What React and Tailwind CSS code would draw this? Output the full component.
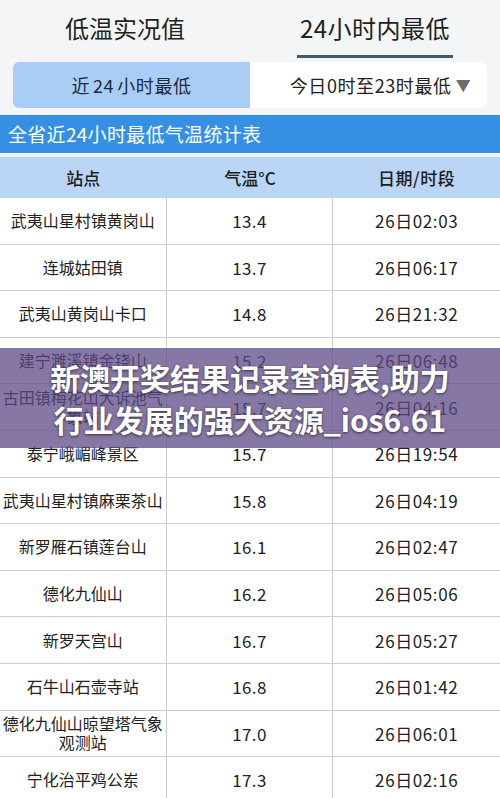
const rows = [
  ['武夷山星村镇黄岗山', '13.4', '26日02:03'],
  ['连城姑田镇', '13.7', '26日06:17'],
  ['武夷山黄岗山卡口', '14.8', '26日21:32'],
  ['建宁濉溪镇金铙山', '15.2', '26日06:48'],
  ['古田镇梅花山大诉池气象站', '15.7', '26日04:16'],
  ['泰宁峨嵋峰景区', '15.7', '26日19:54'],
  ['武夷山星村镇麻栗茶山', '15.8', '26日04:19'],
  ['新罗雁石镇莲台山', '16.1', '26日02:47'],
  ['德化九仙山', '16.2', '26日05:06'],
  ['新罗天宫山', '16.7', '26日05:27'],
  ['石牛山石壶寺站', '16.8', '26日01:42'],
  ['德化九仙山晾望塔气象观测站', '17.0', '26日06:01'],
  ['宁化治平鸡公岽', '17.3', '26日02:16'],
];

const font = { fontFamily: '"Noto Sans CJK SC", "Noto Sans", sans-serif' };

export default function App() {
  return (
    <div className="relative h-[798px] w-[500px] overflow-hidden bg-[#f4f5f6] text-[#222]" style={font}>
      <div className="flex h-[60px]">
        <div className="flex flex-1 items-center justify-center pb-1 text-[24px]">低温实况值</div>
        <div className="flex flex-1 flex-col items-center pt-[13px]">
          <div className="text-[24px] leading-[30px] tracking-[0.5px]">24小时内最低</div>
          <div className="mt-[12px] h-[3px] w-[156px] bg-[#3e5c69]" />
        </div>
      </div>
      <div className="mx-[13px] mt-[2px] flex h-[46px] overflow-hidden rounded-md bg-white text-[18px] tracking-[0.6px]">
        <div className="flex w-1/2 items-center justify-center bg-[#a9cdf6] text-[#1f2a38]">
          近<span className="mx-[3px]">24</span>小时最低
        </div>
        <div className="flex w-1/2 items-center justify-center gap-1 pl-6">
          <span>今日0时至23时最低</span>
          <span className="text-[15px] text-[#6b6b6b]">▼</span>
        </div>
      </div>
      <div className="mt-[6px] bg-[#eef5fa] pb-[4px] pt-[1px]">
        <div className="flex h-[38px] items-center bg-[#3590e3] px-2 text-[19px] tracking-[0.3px] text-white">全省近24小时最低气温统计表</div>
      </div>
      <div className="grid h-[41px] grid-cols-3 bg-[#bad5f5] text-[17px] font-medium text-[#1c1c1c]">
        <div className="flex items-center justify-center">站点</div>
        <div className="flex items-center justify-center">气温°C</div>
        <div className="flex items-center justify-center tracking-[0.5px]">日期/时段</div>
      </div>
      <div className="bg-white">
        {rows.map((r, i) => (
          <div key={i} className="grid h-[46.6px] grid-cols-3 border-b border-[#cdcdcd] text-[16px] leading-[19px] text-[#222]">
            <div className="flex items-center justify-center border-r-[1.5px] border-[#cdcdcd] px-[2px] text-center">{r[0]}</div>
            <div className="flex items-center justify-center border-r-[1.5px] border-[#cdcdcd] text-[17px] tracking-[0.4px]">{r[1]}</div>
            <div className="flex items-center justify-center text-[17px] tracking-[0.6px]">{r[2]}</div>
          </div>
        ))}
      </div>
      <div className="absolute left-0 right-0 top-[348px] flex h-[100px] flex-col items-center justify-center bg-[#5e4a85]/75 text-[30px] font-bold leading-[42px] text-white [text-shadow:0_1px_3px_rgba(0,0,0,0.6)]">
        <div>新澳开奖结果记录查询表,助力</div>
        <div>行业发展的强大资源_ios6.61</div>
      </div>
    </div>
  );
}
